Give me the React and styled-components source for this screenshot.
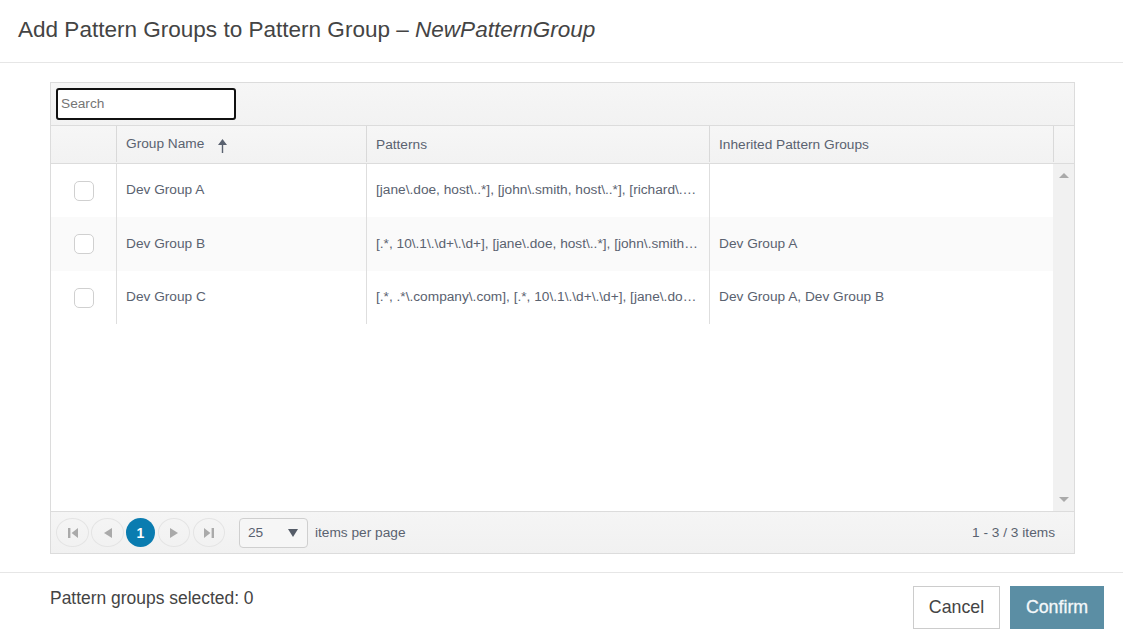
import React from "react";
import styled, { createGlobalStyle } from "styled-components";

const Global = createGlobalStyle`
  html, body { margin: 0; padding: 0; background: #fff; }
  body { font-family: "Liberation Sans", Arial, sans-serif; width: 1123px; height: 641px; overflow: hidden; }
  * { box-sizing: border-box; }
`;

const Dialog = styled.div`
  width: 1123px; height: 641px; display: flex; flex-direction: column; background: #fff;
`;
const Header = styled.header`
  height: 63px; flex: none; border-bottom: 1px solid #e6e6e6; padding: 16px 18px 0;
  font-size: 22.54px; line-height: 28px; color: #444;
  em { font-style: italic; }
`;
const Body = styled.div`
  flex: none; height: 510px; padding: 19px 48px 18px 50px; border-bottom: 1px solid #e6e6e6;
`;
const Grid = styled.div`
  width: 1025px; height: 472px; border: 1px solid #dcdcdc; display: flex; flex-direction: column;
`;
const Toolbar = styled.div`
  height: 43px; flex: none; padding: 5px; background: linear-gradient(#f6f6f6, #f2f2f2); border-bottom: 1px solid #dcdcdc;
`;
const Search = styled.input`
  display: block; width: 180px; height: 32px; border: 2px solid #111; border-radius: 3px; outline: none;
  padding: 0 3px 2px; font: 13.7px "Liberation Sans", Arial, sans-serif; background: #fff; color: #444;
  &::placeholder { color: #757575; opacity: 1; }
`;
const HeadRow = styled.div`
  height: 38px; flex: none; display: grid; grid-template-columns: 66px 250px 343px 344px 1fr;
  background: linear-gradient(#f6f6f6, #f2f2f2); border-bottom: 1px solid #dcdcdc;
`;
const HeadCell = styled.div`
  display: flex; align-items: center; gap: 14px; padding: 0 9px; font-size: 13.7px; color: #5a6270;
  border-right: 1px solid #d9d9d9; height: 36px;
  &:last-child { border-right: none; }
`;
const SortLabel = styled.span`
  padding-bottom: 2px;
`;
const SortArrow = styled.svg`
  margin-top: 4px; flex: none;
`;
const Content = styled.div`
  flex: 1; display: flex; min-height: 0; background: #fff;
`;
const Rows = styled.div`
  flex: 1; min-width: 0;
`;
const Row = styled.div`
  display: grid; grid-template-columns: 66px 250px 343px 1fr; height: ${p => p.$h}px;
  background: ${p => (p.$alt ? "#fafafa" : "#fff")};
`;
const Cell = styled.div`
  display: flex; align-items: center; padding: 0 9px ${p => p.$pb}px 9px; font-size: 13.7px; color: #5a6270; min-width: 0;
  border-right: 1px solid #dedede;
  &:last-child { border-right: none; }
`;
const Clip = styled.span`
  display: block; overflow: hidden; white-space: nowrap; text-overflow: ellipsis; width: 100%;
`;
const CheckCell = styled(Cell)`
  justify-content: center; padding: 0 0 0 1px;
`;
const Check = styled.span`
  display: block; width: 20px; height: 20px; border: 1px solid #d0d0d0; border-radius: 5px; background: #fff;
`;
const Scrollbar = styled.div`
  width: 21px; flex: none; background: #f1f1f1; display: flex; flex-direction: column; justify-content: space-between;
  align-items: center; padding: 7px 0 6px;
`;
const Pager = styled.div`
  height: 42px; flex: none; background: linear-gradient(#f5f5f5, #f1f1f1); border-top: 1px solid #dcdcdc; display: flex; align-items: center;
  padding: 0 19px 0 5px; font-size: 13.7px; color: #5a6270;
`;
const PageBtn = styled.span`
  width: ${p => p.$w}px; height: 29px; margin-right: ${p => p.$m}px; border: 1px solid #e4e4e4; border-radius: 50%; display: flex;
  align-items: center; justify-content: center; flex: none;
`;
const Current = styled.span`
  width: 29px; height: 29px; margin-right: 3px; border-radius: 50%; background: #0a7cb0; color: #fff; font-weight: 700; font-size: 14px;
  display: flex; align-items: center; justify-content: center; flex: none;
`;
const PageSize = styled.div`
  width: 69px; height: 30px; margin: 0 7px 0 11px; border: 1px solid #cfcfcf; border-radius: 4px; display: flex; align-items: center;
  justify-content: space-between; padding: 0 9px 1px 8px; background: #f6f6f6;
`;
const Caret = styled.span`
  display: flex; margin-top: 2px;
`;
const Info = styled.span`
  margin-left: auto;
`;
const Footer = styled.footer`
  flex: 1; display: flex; justify-content: space-between; padding: 13px 19px 0 50px;
`;
const Selected = styled.div`
  font-size: 17.45px; line-height: 24px; color: #444;
`;
const Buttons = styled.div`
  display: flex; gap: 10px; align-items: flex-start;
`;
const CancelBtn = styled.button`
  width: 87px; height: 43px; background: #fff; border: 1px solid #ccc; font: 17.8px "Liberation Sans", Arial, sans-serif; color: #444; padding: 0;
`;
const ConfirmBtn = styled.button`
  width: 94px; height: 43px; background: #5b8ea4; border: none; font: 17.8px "Liberation Sans", Arial, sans-serif; color: #f4f8fa; padding: 0;
  -webkit-text-stroke: 0.3px #f4f8fa;
`;

const Tri = ({ d, w = 10, h = 10, fill = "#aaa" }) => (
  <svg width={w} height={h} viewBox="0 0 10 10"><path d={d} fill={fill} /></svg>
);

const data = [
  ["Dev Group A", "[jane\\.doe, host\\..*], [john\\.smith, host\\..*], [richard\\.roe, host\\..*]", "", 53, false, 3],
  ["Dev Group B", "[.*, 10\\.1\\.\\d+\\.\\d+], [jane\\.doe, host\\..*], [john\\.smith, host\\..*]", "Dev Group A", 54, true, 2],
  ["Dev Group C", "[.*, .*\\.company\\.com], [.*, 10\\.1\\.\\d+\\.\\d+], [jane\\.doe, host\\..*]", "Dev Group A, Dev Group B", 53, false, 3],
];

export default function App() {
  return (
    <Dialog>
      <Global />
      <Header>Add Pattern Groups to Pattern Group – <em>NewPatternGroup</em></Header>
      <Body>
        <Grid>
          <Toolbar><Search placeholder="Search" /></Toolbar>
          <HeadRow>
            <HeadCell />
            <HeadCell>
              <SortLabel>Group Name</SortLabel>
              <SortArrow width="9" height="14" viewBox="0 0 9 14"><path d="M4.5 0 L9 6 H5.2 V14 H3.8 V6 H0 Z" fill="#5a6270" /></SortArrow>
            </HeadCell>
            <HeadCell>Patterns</HeadCell>
            <HeadCell>Inherited Pattern Groups</HeadCell>
            <HeadCell />
          </HeadRow>
          <Content>
            <Rows>
              {data.map(r => (
                <Row key={r[0]} $h={r[3]} $alt={r[4]}>
                  <CheckCell><Check /></CheckCell>
                  <Cell $pb={r[5]}><Clip>{r[0]}</Clip></Cell>
                  <Cell $pb={r[5]}><Clip>{r[1]}</Clip></Cell>
                  <Cell $pb={r[5]}><Clip>{r[2]}</Clip></Cell>
                </Row>
              ))}
            </Rows>
            <Scrollbar>
              <Tri d="M0 7 L5 2 L10 7 Z" />
              <Tri d="M0 2 L10 2 L5 7 Z" />
            </Scrollbar>
          </Content>
          <Pager>
            <PageBtn $w={33} $m={2}><Tri d="M0 0 H2.4 V10 H0 Z M10 0 V10 L3.6 5 Z" /></PageBtn>
            <PageBtn $w={33} $m={2}><Tri d="M9 0 V10 L1 5 Z" /></PageBtn>
            <Current>1</Current>
            <PageBtn $w={32} $m={3}><Tri d="M1 0 V10 L9 5 Z" /></PageBtn>
            <PageBtn $w={32} $m={3}><Tri d="M0 0 V10 L6.4 5 Z M7.6 0 H10 V10 H7.6 Z" /></PageBtn>
            <PageSize>
              <span>25</span>
              <Caret><Tri d="M0 1 H10 L5 9 Z" fill="#555c68" /></Caret>
            </PageSize>
            <span>items per page</span>
            <Info>1 - 3 / 3 items</Info>
          </Pager>
        </Grid>
      </Body>
      <Footer>
        <Selected>Pattern groups selected: 0</Selected>
        <Buttons>
          <CancelBtn>Cancel</CancelBtn>
          <ConfirmBtn>Confirm</ConfirmBtn>
        </Buttons>
      </Footer>
    </Dialog>
  );
}
